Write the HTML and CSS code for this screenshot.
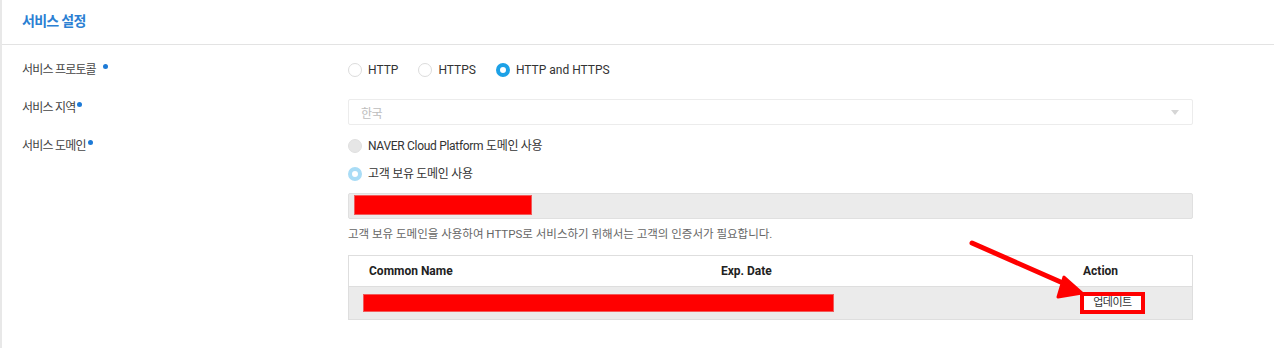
FILE: index.html
```html
<!DOCTYPE html>
<html>
    <head>
        <meta http-equiv="content-type" content="text/html;charset=utf-8">
        <title>서비스 설정</title>
        <link rel="stylesheet" href="styles.css">
    </head>
    <body>
        <div class="panel">
            <!-- 제목 -->
            <div class="panel-head">
                <h2 class="title">서비스 설정</h2>
            </div>
            <div class="form">
                <!-- 프로토콜 -->
                <div class="row row-protocol">
                    <div class="label">서비스 프로토콜<span class="req req-far"></span></div>
                    <div class="field radios">
                        <label class="radio"><span class="dot"></span>HTTP</label>
                        <label class="radio"><span class="dot"></span>HTTPS</label>
                        <label class="radio"><span class="dot on"></span>HTTP and HTTPS</label>
                    </div>
                </div>
                <!-- 지역 -->
                <div class="row row-region">
                    <div class="label">서비스 지역<span class="req"></span></div>
                    <div class="field">
                        <div class="select">
                            <span class="placeholder">한국</span>
                            <span class="caret"></span>
                        </div>
                    </div>
                </div>
                <!-- 도메인 -->
                <div class="row row-domain">
                    <div class="label">서비스 도메인<span class="req"></span></div>
                    <div class="field">
                        <label class="radio option"><span class="dot disabled"></span>NAVER Cloud Platform 도메인 사용</label>
                        <label class="radio option second"><span class="dot soft"></span>고객 보유 도메인 사용</label>
                        <div class="input">
                            <span class="redact redact-input"></span>
                        </div>
                        <p class="help">고객 보유 도메인을 사용하여 HTTPS로 서비스하기 위해서는 고객의 인증서가 필요합니다.</p>
                        <div class="table">
                            <div class="th">Common Name</div>
                            <div class="th">Exp. Date</div>
                            <div class="th">Action</div>
                            <div class="td td-wide"><span class="redact redact-row"></span></div>
                            <div class="td td-action"><button class="btn-update">업데이트</button></div>
                        </div>
                    </div>
                </div>
            </div>
            <!-- 표시 화살표 -->
            <svg class="arrow" width="130" height="70" viewBox="0 0 130 70">
                <line x1="4" y1="4" x2="104" y2="48" stroke="#ff0000" stroke-width="5" stroke-linecap="round"/>
                <polygon points="114,54 96,38 90,58" fill="#ff0000" stroke="#ff0000" stroke-width="3" stroke-linejoin="round"/>
            </svg>
        </div>
    </body>
</html>
```

FILE: styles.css
```css
body {
    margin: 0;
    background: #fff;
    font-family: Roboto, "Noto Sans CJK KR", sans-serif;
    font-size: 12px;
    color: #333;
}
.panel {
    position: relative;
    height: 348px;
    border-left: 2px solid #e8e8e8;
    box-sizing: border-box;
}
/* 제목 */
.panel-head {
    height: 44px;
    border-bottom: 1px solid #e3e3e3;
    padding-left: 20px;
    display: flex;
    align-items: center;
}
.title {
    margin: 0;
    font-size: 14px;
    font-weight: bold;
    color: #2b80d3;
    letter-spacing: -0.7px;
    margin-top: -5px;
}
/* 폼 */
.form {
    padding-left: 20px;
    padding-top: 15px;
}
.row {
    display: flex;
}
.label {
    width: 326px;
    flex: none;
    line-height: 20px;
    letter-spacing: -0.8px;
    color: #444;
}
.req {
    display: inline-block;
    width: 5px;
    height: 5px;
    border-radius: 50%;
    background: #1d7ad6;
    vertical-align: top;
    margin-top: 4px;
    margin-left: 2px;
}
.req-far {
    margin-left: 7px;
}
.field {
    width: 845px;
}
.row-region {
    margin-top: 19px;
}
.row-region .label {
    margin-top: -1px;
}
.row-domain {
    margin-top: 11px;
}
/* 라디오 */
.radios {
    display: flex;
    gap: 20px;
}
.radio {
    display: flex;
    align-items: center;
    height: 20px;
    line-height: 20px;
    color: #333;
}
.option {
    letter-spacing: -0.3px;
}
.option.second {
    margin-top: 8px;
}
.dot {
    width: 14px;
    height: 14px;
    box-sizing: border-box;
    border: 1px solid #dcdcdc;
    border-radius: 50%;
    background: #fff;
    margin-right: 6px;
}
.dot.on {
    border: 4px solid #1da1e6;
}
.dot.disabled {
    background: #e6e6e6;
    border-color: #e0e0e0;
}
.dot.soft {
    border: 4px solid #a9dcf6;
}
/* 셀렉트 */
.select {
    height: 26px;
    box-sizing: border-box;
    border: 1px solid #ececec;
    border-radius: 2px;
    display: flex;
    align-items: center;
    justify-content: space-between;
    padding: 0 12px;
}
.placeholder {
    color: #bdbdbd;
    letter-spacing: -0.5px;
}
.caret {
    width: 0;
    height: 0;
    border-left: 4px solid transparent;
    border-right: 4px solid transparent;
    border-top: 5px solid #d6d6d6;
    margin-right: 1px;
}
/* 입력 */
.input {
    margin-top: 9px;
    height: 26px;
    box-sizing: border-box;
    background: #ebebeb;
    border: 1px solid #e0e0e0;
    border-radius: 2px;
    padding: 1px 5px;
}
.redact {
    display: block;
    background: #ff0000;
    border: 1px solid #f25a5a;
    box-sizing: border-box;
}
.redact-input {
    width: 178px;
    height: 20px;
}
.help {
    margin: 7px 0 0;
    line-height: 16px;
    font-size: 11.5px;
    color: #666;
}
/* 인증서 표 */
.table {
    margin-top: 13px;
    display: grid;
    grid-template-columns: 352px 362px 1fr;
    border: 1px solid #dedede;
}
.th {
    height: 30px;
    line-height: 30px;
    padding-left: 20px;
    font-weight: bold;
    color: #222;
    border-bottom: 1px solid #dedede;
}
.td {
    background: #ebebeb;
    height: 32px;
    display: flex;
    align-items: center;
}
.td-wide {
    grid-column: span 2;
    padding-left: 14px;
}
.redact-row {
    width: 471px;
    height: 18px;
}
.td-action {
    padding-left: 17px;
}
.btn-update {
    width: 65px;
    height: 22px;
    box-sizing: border-box;
    border: 4px solid #ff0000;
    background: #fff;
    font-family: Roboto, "Noto Sans CJK KR", sans-serif;
    font-size: 11px;
    color: #333;
    letter-spacing: -0.5px;
    padding: 0;
    line-height: 14px;
}
/* 화살표 주석 */
.arrow {
    position: absolute;
    left: 966px;
    top: 239px;
}
```
